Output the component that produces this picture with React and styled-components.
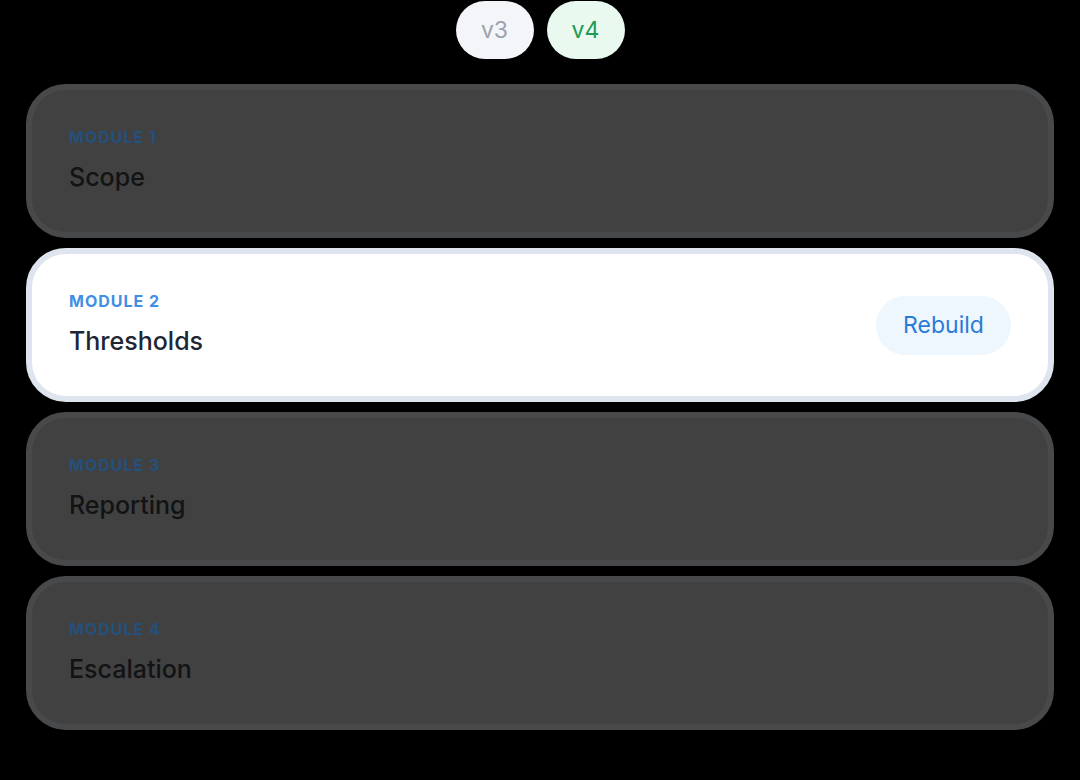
import React from "react";
import styled, { createGlobalStyle } from "styled-components";

const modules = [
  { id: 1, title: "Scope" },
  { id: 2, title: "Thresholds", active: true },
  { id: 3, title: "Reporting" },
  { id: 4, title: "Escalation" },
];

export default function App() {
  return (
    <>
      <GlobalStyle />
      <Page>
        <Versions>
          <VersionPill>v3</VersionPill>
          <VersionPill $current>v4</VersionPill>
        </Versions>

        <List>
          {modules.map((m) => (
            <Card key={m.id} $active={m.active}>
              <Info>
                <Label $active={m.active}>MODULE {m.id}</Label>
                <Title $active={m.active}>{m.title}</Title>
              </Info>
              {m.active && <RebuildButton>Rebuild</RebuildButton>}
            </Card>
          ))}
        </List>
      </Page>
    </>
  );
}

/* ==============>styled-components <============= */
const GlobalStyle = createGlobalStyle`
  html, body {
    margin: 0;
    background: #000;
  }
  body {
    font-family: Inter, "Noto Sans", sans-serif;
  }
`;

const Page = styled.div`
  width: 1080px;
  height: 780px;
  padding: 1px 26px 0;
  box-sizing: border-box;
  background: #000;
`;

const Versions = styled.div`
  display: flex;
  justify-content: center;
  gap: 13px;
`;

const VersionPill = styled.button`
  height: 58px;
  min-width: 78px;
  padding: 0 24px;
  border: none;
  border-radius: 29px;
  font-family: inherit;
  font-size: 23px;
  background: ${(p) => (p.$current ? "#e9f9ef" : "#f3f5f8")};
  color: ${(p) => (p.$current ? "#1f9a55" : "#9aa3ae")};
`;

const List = styled.div`
  display: flex;
  flex-direction: column;
  gap: 10px;
  margin-top: 25px;
`;

const Card = styled.div`
  display: flex;
  align-items: center;
  justify-content: space-between;
  height: 154px;
  box-sizing: border-box;
  padding: 0 37px;
  border-radius: 40px;
  border: 6px solid ${(p) => (p.$active ? "#dfe5ee" : "#48494b")};
  background: ${(p) => (p.$active ? "#ffffff" : "#414141")};
`;

const Info = styled.div`
  display: flex;
  flex-direction: column;
  gap: 17px;
  margin-top: -4px;
`;

const Label = styled.div`
  font-size: 16px;
  line-height: 18px;
  font-weight: 700;
  letter-spacing: 1px;
  color: ${(p) => (p.$active ? "#3f8fe6" : "#25507c")};
`;

const Title = styled.div`
  font-size: 25px;
  line-height: 28px;
  font-weight: 500;
  color: ${(p) => (p.$active ? "#1e2633" : "#121314")};
`;

const RebuildButton = styled.button`
  height: 59px;
  width: 135px;
  border: none;
  border-radius: 30px;
  background: #eef6fe;
  color: #2b7bd6;
  font-family: inherit;
  font-size: 23px;
`;
